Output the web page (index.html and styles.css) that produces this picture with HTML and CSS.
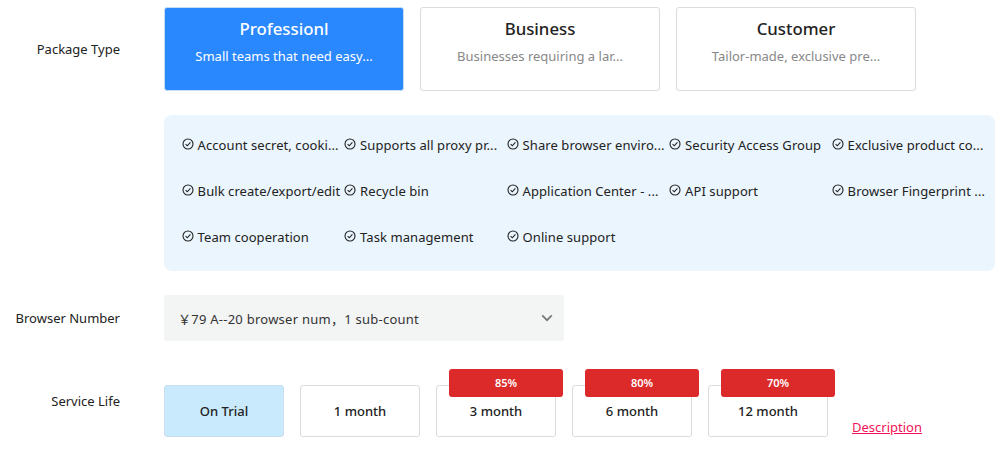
FILE: index.html
```html
<!DOCTYPE html>
<html lang="en">
<head>
<meta charset="utf-8">
<title>Package</title>
<link rel="stylesheet" href="styles.css">
</head>
<body>
<svg class="defs" width="0" height="0" aria-hidden="true">
  <symbol id="check" viewBox="0 0 12 12">
    <circle cx="6" cy="6" r="5" fill="none" stroke="currentColor" stroke-width="1.1"/>
    <path d="M3.6 6.1 5.3 7.8 8.4 4.4" fill="none" stroke="currentColor" stroke-width="1.1"/>
  </symbol>
</svg>
<main class="form">
  <section class="row row-package">
    <div class="label label-package">Package Type</div>
    <div class="cards">
      <div class="card card-active"><div class="card-title">Professionl</div><div class="card-desc">Small teams that need easy...</div></div>
      <div class="card"><div class="card-title">Business</div><div class="card-desc">Businesses requiring a lar...</div></div>
      <div class="card"><div class="card-title">Customer</div><div class="card-desc">Tailor-made, exclusive pre...</div></div>
    </div>
  </section>
  <section class="row row-features">
    <div class="label"></div>
    <ul class="features">
      <li class="feature"><svg class="check"><use href="#check"/></svg><span class="feature-text">Account secret, cooki...</span></li>
      <li class="feature"><svg class="check"><use href="#check"/></svg><span class="feature-text">Supports all proxy pr...</span></li>
      <li class="feature"><svg class="check"><use href="#check"/></svg><span class="feature-text">Share browser enviro...</span></li>
      <li class="feature"><svg class="check"><use href="#check"/></svg><span class="feature-text">Security Access Group</span></li>
      <li class="feature"><svg class="check"><use href="#check"/></svg><span class="feature-text">Exclusive product co...</span></li>
      <li class="feature"><svg class="check"><use href="#check"/></svg><span class="feature-text">Bulk create/export/edit</span></li>
      <li class="feature"><svg class="check"><use href="#check"/></svg><span class="feature-text">Recycle bin</span></li>
      <li class="feature"><svg class="check"><use href="#check"/></svg><span class="feature-text">Application Center - ...</span></li>
      <li class="feature"><svg class="check"><use href="#check"/></svg><span class="feature-text">API support</span></li>
      <li class="feature"><svg class="check"><use href="#check"/></svg><span class="feature-text">Browser Fingerprint ...</span></li>
      <li class="feature"><svg class="check"><use href="#check"/></svg><span class="feature-text">Team cooperation</span></li>
      <li class="feature"><svg class="check"><use href="#check"/></svg><span class="feature-text">Task management</span></li>
      <li class="feature"><svg class="check"><use href="#check"/></svg><span class="feature-text">Online support</span></li>
    </ul>
  </section>
  <section class="row row-browser">
    <div class="label">Browser Number</div>
    <div class="select">
      <span class="select-text">￥79 A--20 browser num，1 sub-count</span>
      <svg class="chevron" viewBox="0 0 12 8"><path d="M1.2 1.4 6 6.2 10.8 1.4" fill="none" stroke="currentColor" stroke-width="1.7"/></svg>
    </div>
  </section>
  <section class="row row-service">
    <div class="label label-service">Service Life</div>
    <div class="terms">
      <div class="term term-active">On Trial</div>
      <div class="term">1 month</div>
      <div class="term">3 month<span class="badge">85%</span></div>
      <div class="term">6 month<span class="badge">80%</span></div>
      <div class="term">12 month<span class="badge">70%</span></div>
      <a class="desc-link" href="#">Description</a>
    </div>
  </section>
</main>
</body>
</html>
```
FILE: styles.css
```css
* { box-sizing: border-box; }
html, body { margin: 0; padding: 0; background: #fff; }
body { font-family: "Noto Sans", "Open Sans", "Noto Sans CJK SC", sans-serif; font-size: 13px; color: #222; width: 1003px; height: 453px; overflow: hidden; }
.defs { position: absolute; }
.form { padding-top: 7px; }
.row { display: flex; gap: 44px; }
.label { width: 120px; flex: none; text-align: right; font-size: 13px; color: #222; }
.label-package { align-self: center; }
.row-features { margin-top: 24px; }
.row-browser { margin-top: 24px; align-items: center; }
.row-service { margin-top: 44px; }
.label-service { padding-top: 7px; }

.cards { display: flex; gap: 16px; }
.card { width: 240px; height: 84px; border: 1px solid #dcdcdc; border-radius: 3px; background: #fff; text-align: center; padding-top: 8px; }
.card-title { font-size: 16.8px; font-weight: 500; line-height: 26px; color: #222; }
.card-desc { font-size: 13px; line-height: 26px; color: #888; margin-top: 1px; }
.card-active { background: #2a88ff; border-color: #c4dcf8; }
.card-active .card-title, .card-active .card-desc { color: #fff; }

.features { list-style: none; margin: 0; padding: 7px 0 11px 18px; width: 831px; height: 156px; background: #eaf5fe; border-radius: 8px; display: grid; grid-template-columns: repeat(5, 162.5px); grid-auto-rows: 46px; align-items: center; }
.feature { display: flex; align-items: center; gap: 4px; min-width: 0; }
.check { width: 12px; height: 12px; flex: none; color: #222; margin-top: -2px; margin-left: -0.4px; }
.feature-text { white-space: nowrap; font-size: 13px; color: #222; letter-spacing: 0.07px; }

.select { width: 400px; height: 46px; background: #f3f5f5; border-radius: 3px; display: flex; align-items: center; justify-content: space-between; padding: 0 11px 0 14px; font-size: 13px; color: #333; }
.select-text { letter-spacing: 0.25px; }
.chevron { width: 12px; height: 8px; color: #777; }

.terms { display: flex; gap: 16px; position: relative; }
.term { position: relative; width: 120px; height: 52px; border: 1px solid #dcdcdc; border-radius: 3px; background: #fff; display: flex; align-items: center; justify-content: center; font-size: 13px; font-weight: 500; color: #222; }
.term-active { background: #c8eafc; border-color: #c8dfee; }
.badge { position: absolute; top: -17px; left: 12px; width: 114px; height: 28px; padding-bottom: 2px; background: #dc2a2a; border-radius: 3px; color: #fff; font-size: 11px; font-weight: 600; display: flex; align-items: center; justify-content: center; }
.desc-link { align-self: flex-end; margin-bottom: 1px; margin-left: 8px; font-size: 13px; color: #f0145a; text-decoration: underline; }
```
